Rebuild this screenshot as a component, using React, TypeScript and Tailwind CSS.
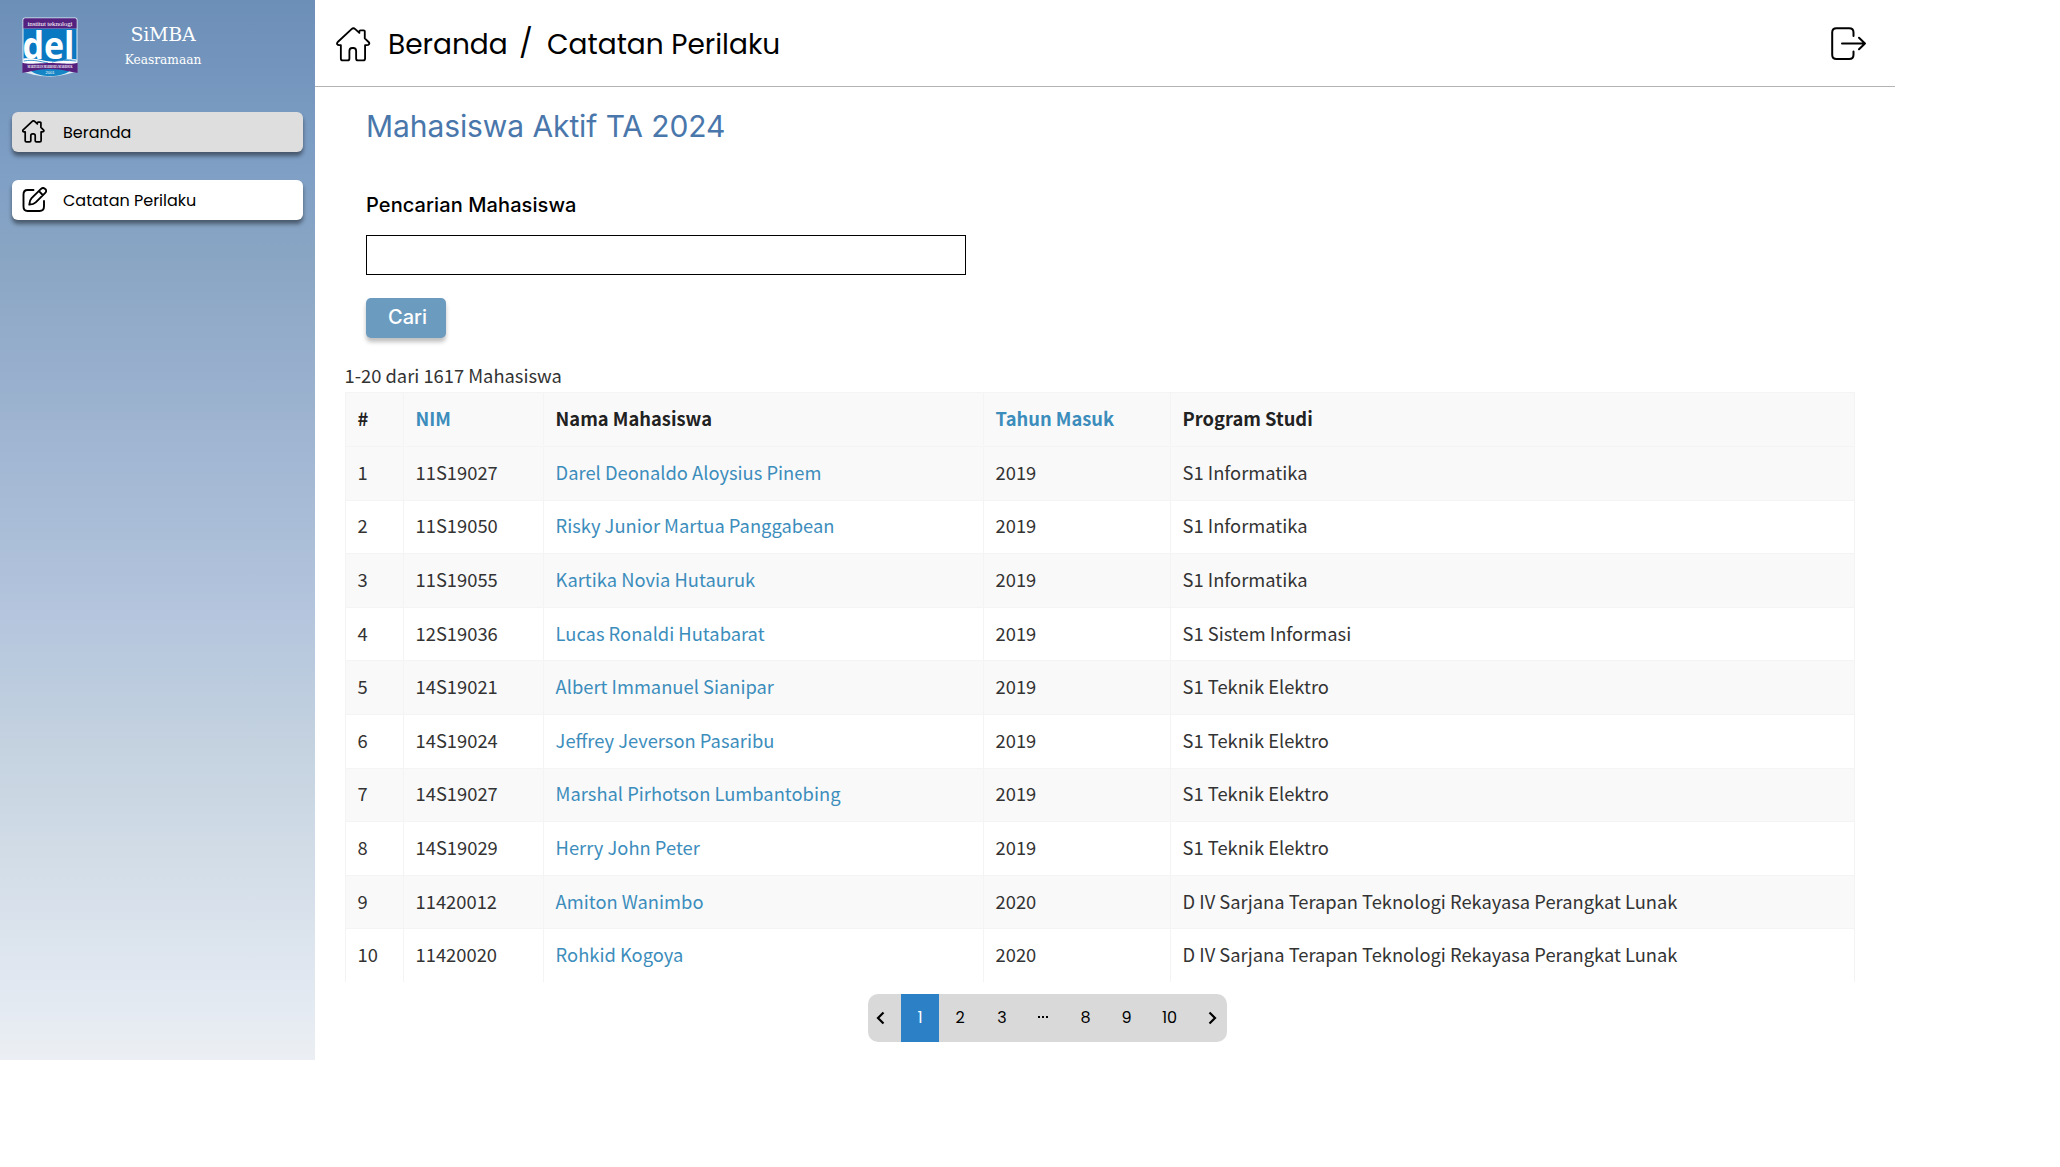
import type { ReactNode } from "react";

const poppins = "font-['Poppins','Inter',sans-serif] [font-feature-settings:'cv11']";
const source = "font-['Noto_Sans_CJK_SC',sans-serif]";

function HomeIcon({ className, stroke }: { className: string; stroke: number }) {
  return (
    <svg viewBox="0 0 36 36" className={className} fill="none" stroke="black" strokeWidth={stroke} strokeLinejoin="round" strokeLinecap="round">
      <path d="M16 2.2 1.8 15.4c-1.6 1.9-.3 3.4 1.6 3.3H5v13.6c0 1.5.6 2 2 2h4.8c1.400 0 2-.5 2-2v-7.700c0-2 1.300-3 2.800-3h1.200c1.600 0 2.900 1 2.900 3v7.700c0 1.500.6 2 2 2h5.200c1.400 0 2-.5 2-2V18.700h1.600c2.200 0 3.700-1.600 2-3.300l-3.900-3.700V4.600c0-.8-.4-1.200-1.200-1.200h-3.200c-.8 0-1.200.4-1.200 1.200v1.500l-4.200-3.900c-1.300-1.200-2.500-1.200-3.800 0Z" />
    </svg>
  );
}

function EditIcon() {
  return (
    <svg viewBox="0 0 25 25" className="h-[25px] w-[25px] shrink-0" fill="none" stroke="black" strokeWidth="1.9" strokeLinejoin="round" strokeLinecap="round">
      <path d="M11.500 3H5.500C2.500 3 1.500 4.500 1.500 7.500V19.500C1.500 22.500 2.500 24 5.500 24H17.500C20.500 24 22 22.500 22 19.500V14" />
      <path d="M18.500 2.300 9.600 11.200C8.200 12.600 7.500 14.700 7.300 17.600 10.200 17.400 12.300 16.700 13.700 15.300L23 6.100C24.600 4.500 24.500 3.200 23.200 2 21.900.7 20.100.7 18.500 2.300ZM17 4.200 20.700 8" />
    </svg>
  );
}

function LogoutIcon() {
  return (
    <svg viewBox="0 0 36 34" className="h-[34px] w-[36px]" fill="none" stroke="black" strokeWidth="2" strokeLinecap="round">
      <path d="M22.500 9V5.500c0-3-1.300-4.300-4.300-4.300H5.500c-3 0-4.300 1.300-4.300 4.300v22.200c0 3 1.300 4.300 4.300 4.300h12.700c3 0 4.300-1.300 4.300-4.300V24.500" />
      <path d="M11 16.500h23M28 10.800l6 5.700-6 5.700" strokeLinejoin="round" />
    </svg>
  );
}

function Logo() {
  return (
    <svg viewBox="0 0 56 60" className="h-[60px] w-[56px] overflow-visible">
      <path d="M3 .5h50a2.500 2.500 0 0 1 2.500 2.500v52c-7 0-13 4.500-27.500 4.500S7 56 .5 55V3A2.500 2.500 0 0 1 3 .5Z" fill="#dcebf5" />
      <path d="M1.500 11.500h53V45h-53z" fill="#0b78c2" />
      <path d="M3 1.300h50a1.700 1.700 0 0 1 1.700 1.700v8.500H1.300V3A1.700 1.700 0 0 1 3 1.300Z" fill="#54217f" />
      <text x="28" y="8.700" textAnchor="middle" textLength="45" className="fill-white font-['Liberation_Serif',serif] text-[7px]">institut teknologi</text>
      <text x="0.500" y="41.500" textLength="52" lengthAdjust="spacingAndGlyphs" className="fill-white font-['Open_Sans',sans-serif] text-[37px] font-bold">del</text>
      <path d="M1.300 41.500c14-1 20 3 28 3s17-3 25.400-2v4H1.300Z" fill="#fff" />
      <path d="M2 44c10-2 17 1 24 2M30 45c8-2 15-2 24-1" stroke="#0b78c2" strokeWidth=".8" fill="none" />
      <path d="M8 53c12-4 29-4 41 0-5 4-12 6-20.500 6S12 57 8 53Z" fill="#1685c6" />
      <path d="M.3 45.800c8 2.200 12 .2 27.700.2s20 2 27.700-.2V55.800c-8-.6-14-3.800-27.700-3.800S8 55.200.3 55.800Z" fill="#54217f" />
      <text x="28" y="50.600" textAnchor="middle" textLength="45" lengthAdjust="spacingAndGlyphs" className="fill-white font-['Liberation_Serif',serif] text-[3.500px] font-bold">MARTUHAN MARROHA MARBISUK</text>
      <text x="28" y="56.700" textAnchor="middle" className="fill-white font-['Liberation_Sans',sans-serif] text-[4px]">2001</text>
    </svg>
  );
}

function NavItem({ icon, label, tone }: { icon: ReactNode; label: string; tone: string }) {
  return (
    <a className={`flex h-10 items-center rounded-md pl-[10px] shadow-[0_4px_4px_rgba(0,0,0,0.45)] ${tone}`}>
      <span className="w-[41px] pb-px">{icon}</span>
      <span className="pt-[2px] text-base text-black">{label}</span>
    </a>
  );
}

const rows = [
  ["1", "11S19027", "Darel Deonaldo Aloysius Pinem", "2019", "S1 Informatika"],
  ["2", "11S19050", "Risky Junior Martua Panggabean", "2019", "S1 Informatika"],
  ["3", "11S19055", "Kartika Novia Hutauruk", "2019", "S1 Informatika"],
  ["4", "12S19036", "Lucas Ronaldi Hutabarat", "2019", "S1 Sistem Informasi"],
  ["5", "14S19021", "Albert Immanuel Sianipar", "2019", "S1 Teknik Elektro"],
  ["6", "14S19024", "Jeffrey Jeverson Pasaribu", "2019", "S1 Teknik Elektro"],
  ["7", "14S19027", "Marshal Pirhotson Lumbantobing", "2019", "S1 Teknik Elektro"],
  ["8", "14S19029", "Herry John Peter", "2019", "S1 Teknik Elektro"],
  ["9", "11420012", "Amiton Wanimbo", "2020", "D IV Sarjana Terapan Teknologi Rekayasa Perangkat Lunak"],
  ["10", "11420020", "Rohkid Kogoya", "2020", "D IV Sarjana Terapan Teknologi Rekayasa Perangkat Lunak"],
];

const cols = "grid grid-cols-[58px_140px_440px_187px_684px]";
const cell = "flex items-center border-r border-[#f4f4f4] pl-[11.600px] whitespace-pre";

function DataTable() {
  return (
    <div className={`h-[590px] w-[1510px] overflow-hidden border-t border-l border-[#f4f4f4] text-[18.330px] text-[#333] ${source}`}>
      <div className={`${cols} h-[53px] bg-[#f9f9f9] pb-px font-bold text-[#222]`}>
        <div className={cell}>#</div>
        <div className={`${cell} text-[#3c8dbc]`}>NIM</div>
        <div className={cell}>Nama Mahasiswa</div>
        <div className={`${cell} text-[#3c8dbc]`}>Tahun Masuk</div>
        <div className={cell}>Program Studi</div>
      </div>
      {rows.map((r, i) => (
        <div key={r[0]} className={`${cols} h-[53.600px] border-t border-[#f4f4f4] leading-6 *:pb-[3px] ${i % 2 === 0 ? "bg-[#f9f9f9]" : "bg-white"}`}>
          <div className={cell}>{r[0]}</div>
          <div className={cell}>{r[1]}</div>
          <div className={`${cell} text-[#3c8dbc]`}>{r[2]}</div>
          <div className={cell}>{r[3]}</div>
          <div className={cell}>{r[4]}</div>
        </div>
      ))}
    </div>
  );
}

function Chevron({ d }: { d: string }) {
  return (
    <svg viewBox="0 0 10 14" className="h-[14px] w-[10px]" fill="none" stroke="black" strokeWidth="2.200">
      <path d={d} />
    </svg>
  );
}

function Pagination() {
  return (
    <nav className={`mt-[12px] ml-[553px] flex h-12 w-[359px] items-stretch overflow-hidden rounded-[10px] bg-[#d9d9d9] text-base text-black ${poppins}`}>
      <span className="flex w-[33px] items-center pl-[8px]"><Chevron d="M7.500 1.500 2 7l5.500 5.500" /></span>
      <span className="flex w-[38px] items-center justify-center bg-[#2c80c6] text-white">1</span>
      <span className="flex w-[42px] items-center justify-center">2</span>
      <span className="flex w-[42px] items-center justify-center">3</span>
      <span className="flex w-[39px] items-center justify-center gap-[2px] pb-[2px]">
        <i className="size-[2px] bg-black" /><i className="size-[2px] bg-black" /><i className="size-[2px] bg-black" />
      </span>
      <span className="flex w-[47px] items-center justify-center">8</span>
      <span className="flex w-[35px] items-center justify-center">9</span>
      <span className="flex w-[51px] items-center justify-center">10</span>
      <span className="flex w-[32px] items-center justify-center pl-[2px]"><Chevron d="M2.500 1.500 8 7l-5.500 5.500" /></span>
    </nav>
  );
}

export default function App() {
  return (
    <div className="flex h-[1167px] w-[2060px] overflow-hidden bg-white">
      <aside className={`h-[1060px] w-[315px] shrink-0 bg-[linear-gradient(180deg,#6c8fb8_0%,#7f9fc5_16%,#8aa6c4_25%,#9eb4d1_40%,#b4c5dd_58%,#c5d3e0_71%,#e4eaf2_95%,#ebeff3_100%)] px-3 ${poppins}`}>
        <div className="flex h-[112px] pt-[17px] pl-[10px]">
          <Logo />
          <div className="ml-[34px] flex w-[102px] flex-col items-center font-['DejaVu_Serif',serif] text-white">
            <div className="mt-[3px] text-[19px] leading-7 tracking-[-0.2px]">SiMBA</div>
            <div className="text-[12.200px] leading-6">Keasramaan</div>
          </div>
        </div>
        <div className="flex flex-col gap-7">
          <NavItem icon={<HomeIcon className="h-[23px] w-[23px]" stroke={2.7} />} label="Beranda" tone="bg-[#dedede]" />
          <NavItem icon={<EditIcon />} label="Catatan Perilaku" tone="bg-white" />
        </div>
      </aside>

      <main className="w-[1580px] shrink-0">
        <header className={`flex h-[87px] items-center border-b border-[#b3b3b3] pt-[2px] pr-[28px] pl-[20.500px] text-[28px] text-black ${poppins}`}>
          <HomeIcon className="h-[35px] w-[35px]" stroke={1.9} />
          <span className="ml-[17.500px] w-[131px] pt-[2px]">Beranda</span>
          <span className="w-[28px] text-[29px]">/</span>
          <span className="pt-[2px]">Catatan Perilaku</span>
          <span className="ml-auto"><LogoutIcon /></span>
        </header>

        <section className="flex flex-col items-start pl-[51px] font-['Inter',sans-serif]">
          <h1 className="mt-[18px] text-[30px] leading-[42px] tracking-[-0.09px] text-[#4a77ab]">Mahasiswa Aktif TA 2024</h1>
          <label className="mt-[46px] text-[20px] leading-6 font-medium tracking-[0.09px] text-black">Pencarian Mahasiswa</label>
          <input className="mt-[18px] h-10 w-[600px] border border-black" />
          <button className="mt-[23px] flex h-10 w-[80px] justify-center rounded-[5px] bg-[#6c9bc0] pt-[7px] pl-[3px] text-[20px] leading-6 font-medium text-white shadow-[0_4px_4px_rgba(0,0,0,0.25)]">Cari</button>
        </section>

        <section className="pl-[30px]">
          <p className={`-ml-[0.500px] mt-[21px] h-[33px] text-[18.330px] leading-[32px] text-[#333] ${source}`}>1-20 dari 1617 Mahasiswa</p>
          <DataTable />
        </section>
        <Pagination />
      </main>
    </div>
  );
}
